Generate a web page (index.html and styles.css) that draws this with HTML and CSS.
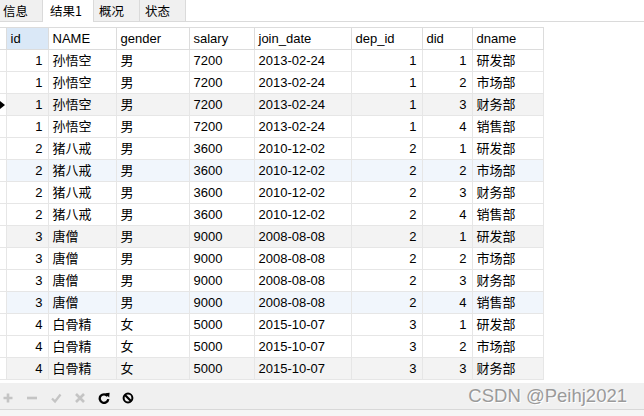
FILE: index.html
```html
<!DOCTYPE html>
<html>
<head>
<meta charset="utf-8">
<link rel="stylesheet" href="styles.css">
</head>
<body>
<div class="app">
  <div class="tabs">
    <div class="tab first">信息</div>
    <div class="tab active">结果1</div>
    <div class="tab">概况</div>
    <div class="tab">状态</div>
  </div>
  <div class="grid-area">
    <table class="grid">
      <colgroup>
        <col class="c-rh"><col class="c-id"><col class="c-name"><col class="c-gender"><col class="c-salary"><col class="c-date"><col class="c-dep"><col class="c-did"><col class="c-dname">
      </colgroup>
      <thead>
        <tr>
          <th class="rh"></th><th class="sel">id</th><th>NAME</th><th>gender</th><th>salary</th><th>join_date</th><th>dep_id</th><th>did</th><th>dname</th>
        </tr>
      </thead>
      <tbody>
        <tr><td class="rh"></td><td class="num">1</td><td>孙悟空</td><td>男</td><td>7200</td><td>2013-02-24</td><td class="num">1</td><td class="num">1</td><td>研发部</td></tr>
        <tr><td class="rh"></td><td class="num">1</td><td>孙悟空</td><td>男</td><td>7200</td><td>2013-02-24</td><td class="num">1</td><td class="num">2</td><td>市场部</td></tr>
        <tr class="gray"><td class="rh"><span class="cur"></span></td><td class="num">1</td><td>孙悟空</td><td>男</td><td>7200</td><td>2013-02-24</td><td class="num">1</td><td class="num">3</td><td>财务部</td></tr>
        <tr><td class="rh"></td><td class="num">1</td><td>孙悟空</td><td>男</td><td>7200</td><td>2013-02-24</td><td class="num">1</td><td class="num">4</td><td>销售部</td></tr>
        <tr><td class="rh"></td><td class="num">2</td><td>猪八戒</td><td>男</td><td>3600</td><td>2010-12-02</td><td class="num">2</td><td class="num">1</td><td>研发部</td></tr>
        <tr class="blue"><td class="rh"></td><td class="num">2</td><td>猪八戒</td><td>男</td><td>3600</td><td>2010-12-02</td><td class="num">2</td><td class="num">2</td><td>市场部</td></tr>
        <tr><td class="rh"></td><td class="num">2</td><td>猪八戒</td><td>男</td><td>3600</td><td>2010-12-02</td><td class="num">2</td><td class="num">3</td><td>财务部</td></tr>
        <tr><td class="rh"></td><td class="num">2</td><td>猪八戒</td><td>男</td><td>3600</td><td>2010-12-02</td><td class="num">2</td><td class="num">4</td><td>销售部</td></tr>
        <tr class="gray"><td class="rh"></td><td class="num">3</td><td>唐僧</td><td>男</td><td>9000</td><td>2008-08-08</td><td class="num">2</td><td class="num">1</td><td>研发部</td></tr>
        <tr><td class="rh"></td><td class="num">3</td><td>唐僧</td><td>男</td><td>9000</td><td>2008-08-08</td><td class="num">2</td><td class="num">2</td><td>市场部</td></tr>
        <tr><td class="rh"></td><td class="num">3</td><td>唐僧</td><td>男</td><td>9000</td><td>2008-08-08</td><td class="num">2</td><td class="num">3</td><td>财务部</td></tr>
        <tr class="blue"><td class="rh"></td><td class="num">3</td><td>唐僧</td><td>男</td><td>9000</td><td>2008-08-08</td><td class="num">2</td><td class="num">4</td><td>销售部</td></tr>
        <tr><td class="rh"></td><td class="num">4</td><td>白骨精</td><td>女</td><td>5000</td><td>2015-10-07</td><td class="num">3</td><td class="num">1</td><td>研发部</td></tr>
        <tr><td class="rh"></td><td class="num">4</td><td>白骨精</td><td>女</td><td>5000</td><td>2015-10-07</td><td class="num">3</td><td class="num">2</td><td>市场部</td></tr>
        <tr class="gray"><td class="rh"></td><td class="num">4</td><td>白骨精</td><td>女</td><td>5000</td><td>2015-10-07</td><td class="num">3</td><td class="num">3</td><td>财务部</td></tr>
      </tbody>
    </table>
  </div>
  <div class="toolbar">
    <div class="tools">
      <svg class="ico" viewBox="0 0 12 12"><path d="M1.5 6H10.5M6 1.5V10.5" stroke="#c4c4c4" stroke-width="2.6" fill="none"/></svg>
      <svg class="ico" viewBox="0 0 12 12"><path d="M1 6H11" stroke="#c4c4c4" stroke-width="2.6" fill="none"/></svg>
      <svg class="ico" viewBox="0 0 12 12"><path d="M2 6.5L5 9.5L10.5 2.5" stroke="#c4c4c4" stroke-width="2.3" fill="none"/></svg>
      <svg class="ico" viewBox="0 0 12 12"><path d="M2 2L10 10M10 2L2 10" stroke="#c4c4c4" stroke-width="2.6" fill="none"/></svg>
      <svg class="ico" viewBox="0 0 12 12"><path d="M9.6 4.2A4.3 4.3 0 1 0 10.3 7.2" stroke="#000" stroke-width="2.3" fill="none"/><path d="M7 1.2L11.6 0.8L11.2 5.4Z" fill="#000"/></svg>
      <svg class="ico" viewBox="0 0 12 12"><circle cx="6" cy="6" r="4.4" stroke="#000" stroke-width="2" fill="none"/><path d="M3 3L9 9" stroke="#000" stroke-width="2.2"/></svg>
    </div>
    <div class="mark">CSDN @Peihj2021</div>
  </div>
  <div class="status"></div>
</div>
</body>
</html>
```

FILE: styles.css
```css
html, body {
  margin: 0;
  padding: 0;
  background: #fff;
}
.app {
  width: 644px;
  height: 416px;
  display: flex;
  flex-direction: column;
  font-family: "Liberation Sans", "Noto Sans CJK SC", sans-serif;
  font-size: 13px;
  color: #000;
  overflow: hidden;
}
.tabs {
  display: flex;
  height: 21px;
  border-bottom: 1px solid #dadada;
  flex: none;
}
.tab {
  width: 46px;
  box-sizing: border-box;
  padding-left: 5px;
  background: #f0f0f0;
  border-right: 1px solid #dadada;
  line-height: 21px;
  font-family: "Noto Sans CJK SC", sans-serif;
  font-size: 12.5px;
}
.tab.first {
  width: 43px;
  padding-left: 3px;
}
.tab.active {
  width: 51px;
  padding-left: 7px;
  background: #fff;
  height: 22px;
}
.grid-area {
  flex: 1;
  padding-top: 5px;
}
.grid {
  border-collapse: collapse;
  table-layout: fixed;
  width: 543px;
}
.c-rh { width: 6px; }
.c-id { width: 42px; }
.c-name { width: 68px; }
.c-gender { width: 73px; }
.c-salary { width: 65px; }
.c-date { width: 97px; }
.c-dep { width: 71px; }
.c-did { width: 50px; }
.c-dname { width: 71px; }
.grid th, .grid td {
  height: 21px;
  padding: 0 4px;
  border: 1px solid #e6e6e6;
  text-align: left;
  font-weight: normal;
  white-space: nowrap;
  overflow: hidden;
  line-height: 20px;
}
.grid th {
  border-color: #dcdcdc;
}
.grid th.sel {
  background: #dae8f7;
}
.grid .rh {
  padding: 0;
  position: relative;
  border-left: none;
}
.grid td.num {
  text-align: right;
  padding-right: 5px;
}
.grid tr.gray td {
  background: #f3f3f3;
}
.grid tr.blue td {
  background: #f1f6fc;
}
.grid tr td.rh {
  background: #fff;
}
.cur {
  position: absolute;
  left: 0;
  top: 7px;
  width: 0;
  height: 0;
  border-top: 4px solid transparent;
  border-bottom: 4px solid transparent;
  border-left: 5px solid #000;
}
.toolbar {
  flex: none;
  height: 26px;
  background: #f0f0f0;
  display: flex;
  align-items: center;
  justify-content: space-between;
  border-bottom: 1px solid #d8d8d8;
}
.tools {
  display: flex;
  align-items: center;
  gap: 12px;
  padding-left: 2px;
  padding-top: 4px;
}
.ico {
  width: 12px;
  height: 12px;
  display: block;
}
.mark {
  font-family: "Liberation Sans", sans-serif;
  font-size: 18.5px;
  color: #9a9a9a;
  text-shadow: 1px 1px 0 #fff;
  padding-right: 17px;
}
.status {
  flex: none;
  height: 6px;
  background: #f5f5f5;
}
```
